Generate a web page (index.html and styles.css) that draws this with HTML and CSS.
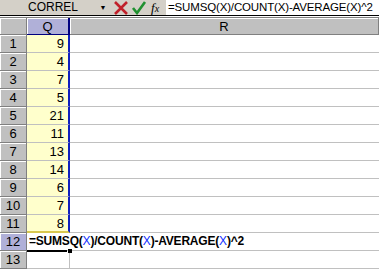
FILE: index.html
```html
<!DOCTYPE html>
<html lang="en">
<head>
    <meta charset="UTF-8">
    <title>CORREL</title>
    <link rel="stylesheet" href="styles.css">
</head>
<body>
    <div class="formula-bar">
        <div class="name-box">CORREL</div>
        <div class="drop">&#9660;</div>
        <div class="btn cancel">
            <svg width="16" height="14" viewBox="0 0 16 14"><path d="M2 1 L14 13 M14 1 L2 13" stroke="#c0202a" stroke-width="2.6"/></svg>
        </div>
        <div class="btn ok">
            <svg width="16" height="14" viewBox="0 0 16 14"><path d="M2 7 L6 12 L14 1" stroke="#209030" stroke-width="2.6" fill="none"/></svg>
        </div>
        <div class="fx"><i>f</i><span>x</span></div>
        <div class="formula">=SUMSQ(X)/COUNT(X)-AVERAGE(X)^2</div>
    </div>
    <div class="sheet">
        <div class="corner"></div>
        <div class="colhead sel">Q</div>
        <div class="colhead">R</div>

        <div class="rowhead">1</div><div class="q">9</div><div class="r"></div>
        <div class="rowhead">2</div><div class="q">4</div><div class="r"></div>
        <div class="rowhead">3</div><div class="q">7</div><div class="r"></div>
        <div class="rowhead">4</div><div class="q">5</div><div class="r"></div>
        <div class="rowhead">5</div><div class="q">21</div><div class="r"></div>
        <div class="rowhead">6</div><div class="q">11</div><div class="r"></div>
        <div class="rowhead">7</div><div class="q">13</div><div class="r"></div>
        <div class="rowhead">8</div><div class="q">14</div><div class="r"></div>
        <div class="rowhead">9</div><div class="q">6</div><div class="r"></div>
        <div class="rowhead">10</div><div class="q">7</div><div class="r"></div>
        <div class="rowhead">11</div><div class="q last">8</div><div class="r"></div>

        <div class="rowhead sel">12</div>
        <div class="edit">=SUMSQ(<span class="ref">X</span>)/COUNT(<span class="ref">X</span>)-AVERAGE(<span class="ref">X</span>)^2<span class="handle"></span></div>

        <div class="rowhead">13</div><div class="blank"></div><div class="r"></div>
    </div>
</body>
</html>
```

FILE: styles.css
```css
body {
    margin: 0;
    width: 379px;
    height: 270px;
    overflow: hidden;
    background: #ffffff;
    font-family: "Liberation Sans", Arial, sans-serif;
}
.formula-bar {
    height: 15px;
    background: #d4d0c8;
    border-bottom: 1px solid #000000;
    display: flex;
    align-items: center;
    font-size: 12px;
    color: #000000;
}
.name-box {
    width: 72px;
    padding-left: 28px;
    box-sizing: border-box;
    line-height: 15px;
}
.drop {
    width: 18px;
    margin-left: 22px;
    font-size: 7px;
    text-align: center;
}
.btn {
    width: 18px;
    height: 15px;
    display: flex;
    align-items: center;
    justify-content: center;
}
.fx {
    width: 15px;
    margin-left: 3px;
    font-family: "Liberation Serif", "Times New Roman", serif;
    font-size: 13px;
    line-height: 15px;
}
.fx span {
    font-size: 10px;
    font-style: italic;
}
.formula {
    flex: 1;
    height: 15px;
    background: #ffffff;
    padding-left: 2px;
    line-height: 15px;
    font-size: 11.5px;
    letter-spacing: -0.15px;
    white-space: nowrap;
    overflow: hidden;
}
.sheet {
    margin-top: 1px;
    display: grid;
    grid-template-columns: 27px 43px 1fr;
    grid-template-rows: 17px repeat(13, 18px);
    border-top: 1px solid #808080;
    font-size: 13px;
}
.corner,
.colhead,
.rowhead {
    background: #c0c0c0;
    border-right: 1px solid #808080;
    border-bottom: 1px solid #808080;
    box-shadow: inset 1px 1px 0 #ffffff;
    box-sizing: border-box;
    display: flex;
    align-items: center;
    justify-content: center;
}
.colhead.sel,
.rowhead.sel {
    background: #b0b0d8;
}
.colhead.sel {
    border-bottom: 1px solid #000080;
    border-right: 2px solid #000080;
}
.q {
    background: #ffffcc;
    border-right: 2px solid #1020c0;
    border-bottom: 1px solid #c0c0c0;
    text-align: right;
    padding-right: 4px;
    line-height: 18px;
    box-sizing: border-box;
}
.q.last {
    border-bottom: 2px solid #d8c850;
}
.r,
.blank {
    border-bottom: 1px solid #c0c0c0;
    box-sizing: border-box;
}
.blank {
    border-right: 1px solid #c0c0c0;
}
.edit {
    grid-column: 2 / 4;
    position: relative;
    font-weight: bold;
    font-size: 12px;
    line-height: 17px;
    padding-left: 2px;
    border-bottom: 1px solid #c0c0c0;
    box-sizing: border-box;
    letter-spacing: -0.2px;
    white-space: nowrap;
}
.edit::after {
    content: "";
    position: absolute;
    left: 0;
    bottom: -2px;
    width: 40px;
    height: 2px;
    background: #000000;
}
.ref {
    color: #1030ff;
    font-weight: normal;
}
.handle {
    position: absolute;
    left: 41px;
    bottom: -3px;
    width: 4px;
    height: 4px;
    background: #000000;
}
```
